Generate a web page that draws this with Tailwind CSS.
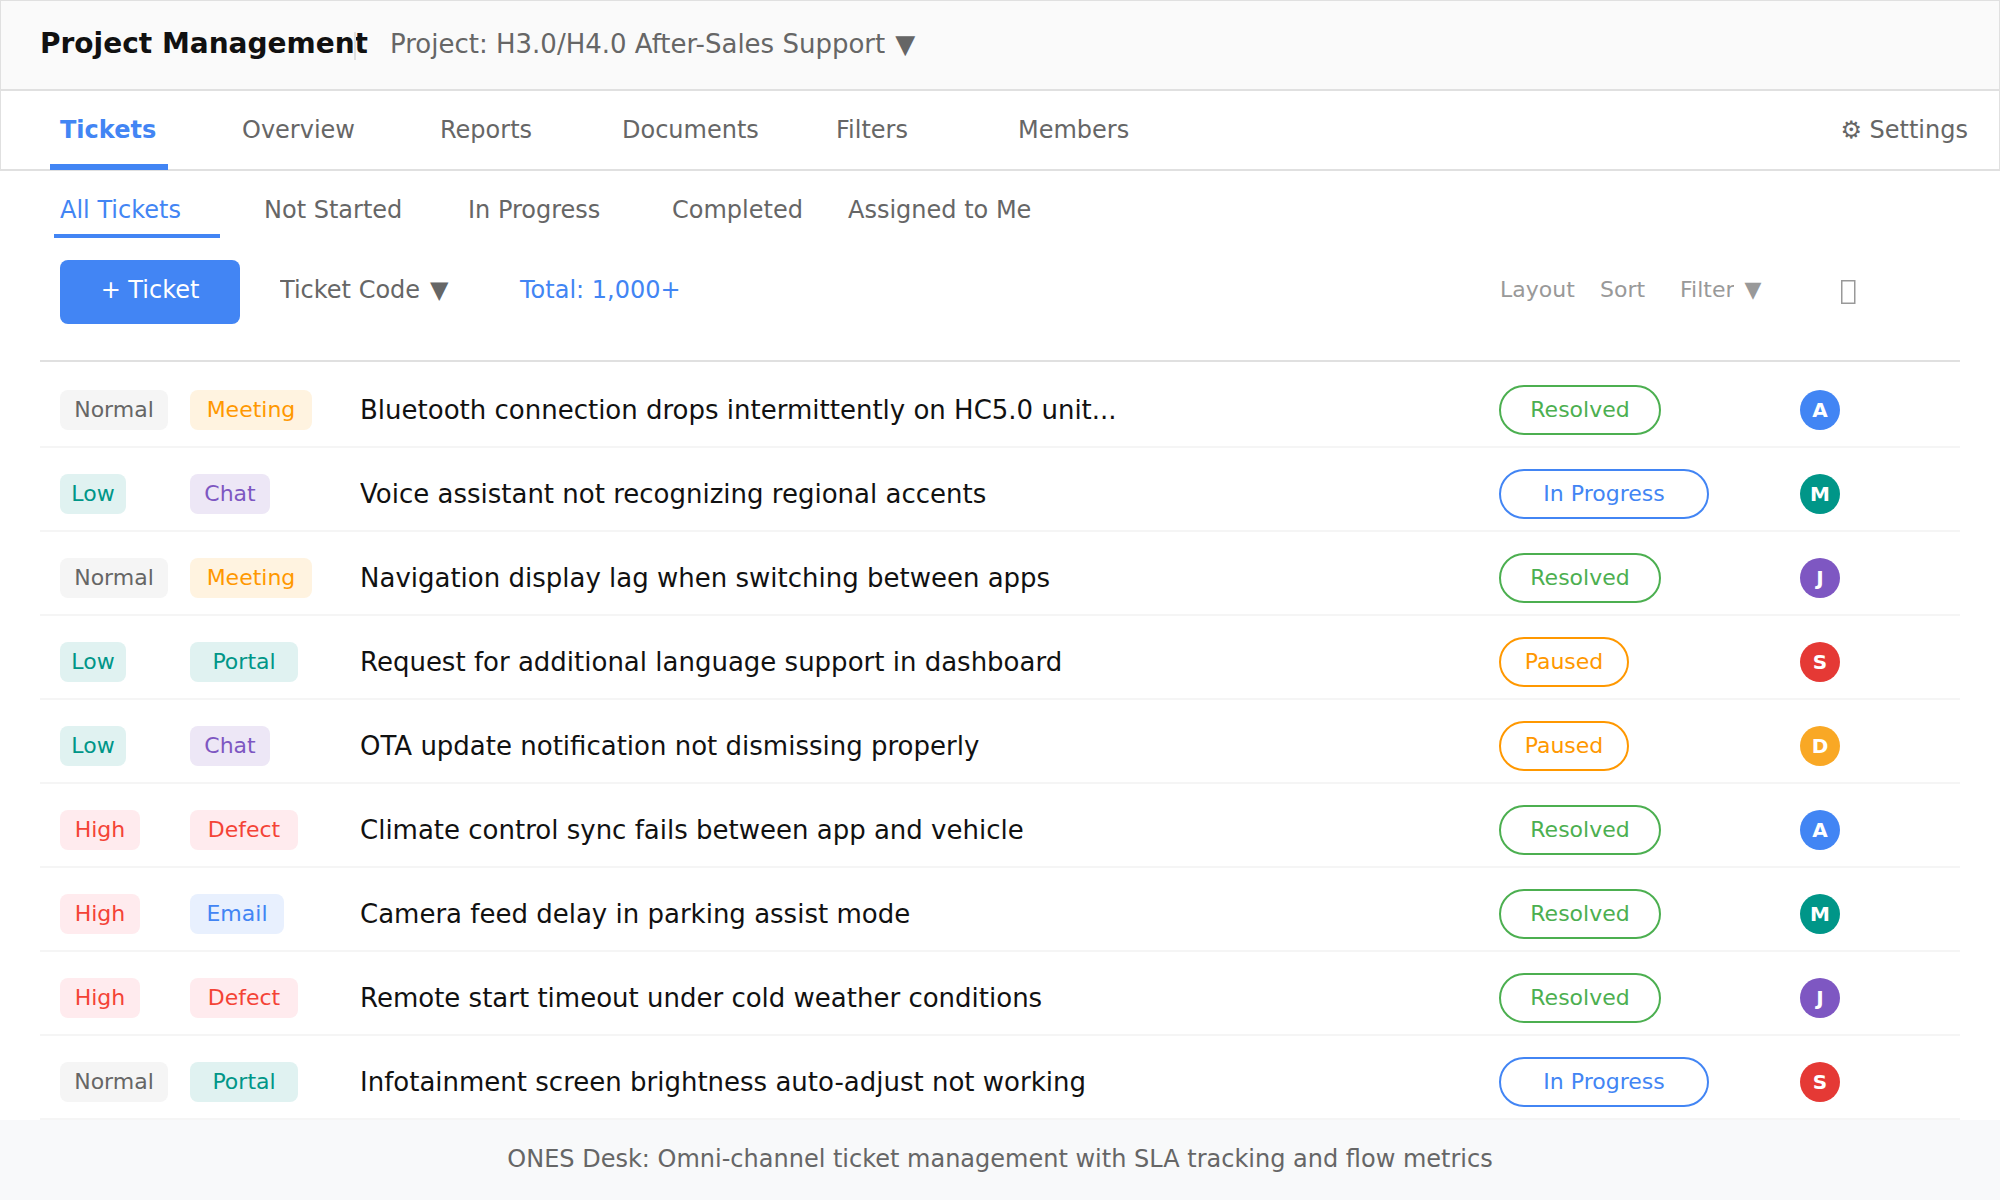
<!DOCTYPE html>
<html lang="en">
<head>
  <meta charset="UTF-8" />
  <meta name="viewport" content="width=device-width, initial-scale=1.0"/>
  <title>Project Management</title>
  <script src="https://cdn.jsdelivr.net/npm/@tailwindcss/browser@4"></script>
</head>
<body class="bg-white text-[#666666] min-h-screen flex flex-col font-['DejaVu_Sans',sans-serif] text-[24px] leading-8">

  <header class="relative flex items-center h-[91px] pl-[39px] pb-0.5 bg-[#fafafa] border border-b-2 border-[#e0e0e0]">
    <h1 class="w-[350px] whitespace-nowrap text-[28px] font-bold text-[#111111]">Project Management</h1>
    <span class="absolute left-[353px] top-[31px] w-0.5 h-7 bg-[#e0e0e0]"></span>
    <label class="flex items-center gap-2.5 text-[26px]">
      <select aria-label="Project" class="appearance-none field-sizing-content bg-transparent">
        <option>Project: H3.0/H4.0 After-Sales Support</option>
      </select>
      <span>▼</span>
    </label>
  </header>

  <nav class="flex items-center h-20 px-[49px] border-x border-b-2 border-[#e0e0e0]">
    <a href="#" class="w-[118px] h-[79px] mr-[74px] pl-2.5 pt-[23px] -mb-px font-bold text-[#4285f4] border-b-6 border-[#4285f4]">Tickets</a>
    <a href="#" class="w-[198px]">Overview</a>
    <a href="#" class="w-[182px]">Reports</a>
    <a href="#" class="w-[214px]">Documents</a>
    <a href="#" class="w-[182px]">Filters</a>
    <a href="#">Members</a>
    <a href="#" class="ml-auto -mr-[18px]">⚙ Settings</a>
  </nav>

  <nav class="flex px-[54px] pt-[23px]">
    <a href="#" class="w-[166px] h-11 mr-11 pl-1.5 text-[#4285f4] border-b-4 border-[#4285f4]">All Tickets</a>
    <a href="#" class="w-[204px]">Not Started</a>
    <a href="#" class="w-[204px]">In Progress</a>
    <a href="#" class="w-[176px]">Completed</a>
    <a href="#">Assigned to Me</a>
  </nav>

  <main class="px-10">
    <div class="flex items-start pt-[22px] pb-9 pl-5 border-b-2 border-[#e0e0e0]">
      <button class="w-[180px] h-16 pb-1 rounded-lg bg-[#4285f4] text-white">+ Ticket</button>
      <label class="flex gap-2.5 w-[240px] ml-10 pt-3.5">
        <select aria-label="Ticket code" class="appearance-none field-sizing-content bg-transparent">
          <option>Ticket Code</option>
        </select>
        <span>▼</span>
      </label>
      <span class="pt-3.5 text-[#4285f4]">Total: 1,000+</span>
      <div class="flex ml-auto w-[460px] pt-3.5 text-[22px] text-[#999999]">
        <button class="w-[100px] text-left">Layout</button>
        <button class="w-20 text-left">Sort</button>
        <label class="flex gap-2.5 w-40">
          <select aria-label="Filter" class="appearance-none field-sizing-content bg-transparent">
            <option>Filter</option>
          </select>
          <span>▼</span>
        </label>
        <button aria-label="Search" class="flex pt-1.5">
          <svg class="w-4 h-6" viewBox="0 0 16 24" fill="none" stroke="#999999" stroke-width="1.5"><rect x="1.75" y="0.75" width="13" height="22.5"/></svg>
        </button>
      </div>
    </div>

    <table class="w-full mt-0.5 table-fixed border-separate border-spacing-0">
      <colgroup>
        <col class="w-[150px]"/>
        <col class="w-[170px]"/>
        <col/>
        <col class="w-[301px]"/>
        <col class="w-[160px]"/>
      </colgroup>
      <tbody id="tickets"></tbody>
    </table>
  </main>

  <footer class="grow flex items-center justify-center min-h-20 pb-0.5 bg-[#f8f9fa]">
    ONES Desk: Omni-channel ticket management with SLA tracking and flow metrics
  </footer>

<script>
  const etiquetas = {
    "Normal": "w-[108px] bg-[#f5f5f5] text-[#666666]",
    "Low": "w-[66px] bg-[#e0f2f1] text-[#009688]",
    "High": "w-20 bg-[#ffebee] text-[#f44336]",
    "Meeting": "w-[122px] bg-[#fff3e0] text-[#ff9800]",
    "Chat": "w-20 bg-[#ede7f6] text-[#7e57c2]",
    "Portal": "w-[108px] bg-[#e0f2f1] text-[#009688]",
    "Defect": "w-[108px] bg-[#ffebee] text-[#f44336]",
    "Email": "w-[94px] bg-[#e8f0fe] text-[#4285f4]"
  };

  const estados = {
    "Resolved": "w-[162px] text-[#4caf50] border-[#4caf50]",
    "In Progress": "w-[210px] text-[#4285f4] border-[#4285f4]",
    "Paused": "w-[130px] text-[#ff9800] border-[#ff9800]"
  };

  const avatares = {
    "A": "bg-[#4285f4]",
    "M": "bg-[#009688]",
    "J": "bg-[#7e57c2]",
    "S": "bg-[#e53935]",
    "D": "bg-[#f9a825]"
  };

  const tickets = [
    ["Normal", "Meeting", "Bluetooth connection drops intermittently on HC5.0 unit...", "Resolved", "A"],
    ["Low", "Chat", "Voice assistant not recognizing regional accents", "In Progress", "M"],
    ["Normal", "Meeting", "Navigation display lag when switching between apps", "Resolved", "J"],
    ["Low", "Portal", "Request for additional language support in dashboard", "Paused", "S"],
    ["Low", "Chat", "OTA update notification not dismissing properly", "Paused", "D"],
    ["High", "Defect", "Climate control sync fails between app and vehicle", "Resolved", "A"],
    ["High", "Email", "Camera feed delay in parking assist mode", "Resolved", "M"],
    ["High", "Defect", "Remote start timeout under cold weather conditions", "Resolved", "J"],
    ["Normal", "Portal", "Infotainment screen brightness auto-adjust not working", "In Progress", "S"]
  ];

  const etiqueta = nombre => `<span class="flex items-center justify-center h-10 rounded-lg text-[22px] ${etiquetas[nombre]}">${nombre}</span>`;

  document.getElementById("tickets").innerHTML = tickets.map(([prioridad, canal, titulo, estado, persona]) => `
    <tr class="h-[84px] *:pt-2.5 *:border-b-2 *:border-[#f5f5f5]">
      <td class="pl-5">${etiqueta(prioridad)}</td>
      <td>${etiqueta(canal)}</td>
      <td class="text-[26px] text-[#111111] truncate">${titulo}</td>
      <td><span class="flex items-center justify-center h-[50px] rounded-full border-2 text-[22px] ${estados[estado]}">${estado}</span></td>
      <td><span class="flex items-center justify-center size-10 rounded-full text-[20px] font-bold text-white ${avatares[persona]}">${persona}</span></td>
    </tr>`).join("");
</script>

</body>
</html>
